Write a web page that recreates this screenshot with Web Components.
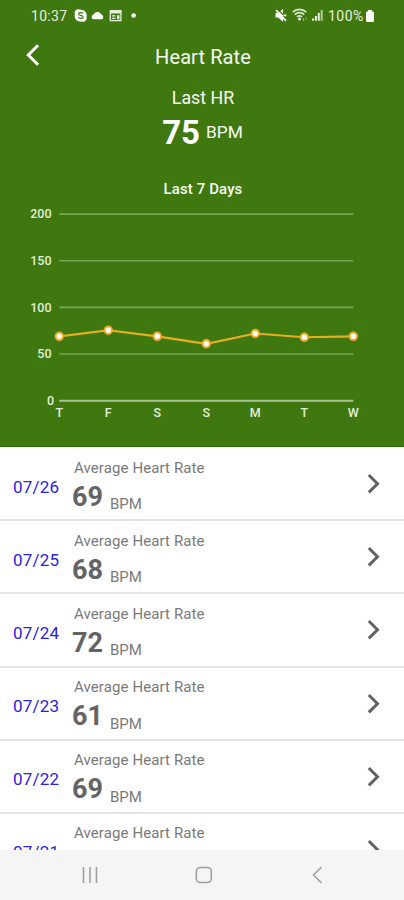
<!DOCTYPE html>
<html lang="en">
<head>
<meta charset="utf-8">
<title>Heart Rate</title>
<style>
  body {
    margin: 0;
    font-family: Roboto, "Liberation Sans", sans-serif;
    background: #fff;
  }
</style>
</head>
<body>
<heart-app>
  <status-bar slot="header" time="10:37" battery="100%"></status-bar>
  <title-bar slot="header">Heart Rate</title-bar>
  <last-reading slot="header" value="75" unit="BPM">Last HR</last-reading>
  <week-chart slot="header" values="69,75.5,69,61,72,68,69" days="T,F,S,S,M,T,W">Last 7 Days</week-chart>
  <day-row date="07/26" value="69">Average Heart Rate</day-row>
  <day-row date="07/25" value="68">Average Heart Rate</day-row>
  <day-row date="07/24" value="72">Average Heart Rate</day-row>
  <day-row date="07/23" value="61">Average Heart Rate</day-row>
  <day-row date="07/22" value="69">Average Heart Rate</day-row>
  <day-row date="07/21" value="68">Average Heart Rate</day-row>
  <nav-bar slot="footer"></nav-bar>
</heart-app>

<script>
class HeartApp extends HTMLElement {
  constructor() {
    super();
    this.attachShadow({ mode: 'open' }).innerHTML = `
      <style>
        :host {
          display: flex;
          flex-direction: column;
          height: 900px;
          overflow: hidden;
        }

        header {
          flex: none;
          height: 447px;
          box-sizing: border-box;
          background: #3e780e;
          border-bottom: 1px solid #267000;
          color: #f8fcf5;
        }

        main {
          flex: 1;
          min-height: 0;
          padding-top: 1px;
          overflow: hidden;
        }
      </style>
      <header><slot name="header"></slot></header>
      <main><slot></slot></main>
      <slot name="footer"></slot>
    `;
  }
}

class StatusBar extends HTMLElement {
  connectedCallback() {
    this.attachShadow({ mode: 'open' }).innerHTML = `
      <style>
        :host {
          display: flex;
          align-items: center;
          height: 32px;
          padding: 0 29px 0 31px;
          font-size: 14px;
          line-height: 32px;
          color: #e6f0df;
        }

        svg {
          flex: none;
          fill: currentColor;
        }

        .time {
          width: 43px;
          letter-spacing: 0.3px;
        }

        .battery {
          width: 37px;
          letter-spacing: 0.5px;
        }

        .gap {
          flex: 1;
        }
      </style>
      <span class="time">${this.getAttribute('time')}</span>
      <svg width="64" height="16" viewBox="74 8 64 16">
        <path d="M78.5 9.2c1 0 1.500.2 2.200.5a5.700 5.700 0 0 1 5.800 7.200 3.600 3.600 0 0 1-5 4.500 5.700 5.700 0 0 1-6.600-7.300 3.600 3.600 0 0 1 3.600-4.900z" fill="#fff"/>
        <path d="M83 13.300c-.6-.9-4.500-1.200-4.500.6 0 1.700 4.700 1.100 4.700 3.100 0 1.900-4.100 1.800-4.900.3" fill="none" stroke="#3e780e" stroke-width="1.200"/>
        <path d="M93.500 19.300a2.400 2.400 0 0 1 0-4.700 4.100 4.100 0 0 1 7.600-.3 3 3 0 0 1 1.300 5z" fill="#fff"/>
        <path d="M110.300 10.700h10.600v10h-10.600z" fill="none" stroke="#e6f0df" stroke-width="1.300"/>
        <path d="M110 11h11.200v2.600H110zM112 15.200h3.500v1.300H112zM117 15.200h2.500v4H117zM112 17.700h3.500v1.300H112z"/>
        <circle cx="133.600" cy="15.500" r="2.300" fill="#fff"/>
      </svg>
      <span class="gap"></span>
      <svg width="53" height="16" viewBox="275 8 53 16">
        <path d="M275.500 13h2.600l4.900-3.900v12.700l-4.900-4.300h-2.600z" fill="#fff"/>
        <path d="M278.500 10l9 9.600" stroke="#3e780e" stroke-width="1.200"/>
        <path d="M276 10l10 10.800M283.500 15.300h2.800" fill="none" stroke="#fff" stroke-width="1.700"/>
        <g fill="none" stroke="#d4e5ca" stroke-width="1.700">
          <path d="M292.700 12.200a9.800 9.800 0 0 1 13.600 0M294.800 14.600a6.700 6.700 0 0 1 9.400 0M297 17a3.600 3.600 0 0 1 5 0"/>
        </g>
        <circle cx="299.500" cy="19" r="1.500"/>
        <path d="M303 18h1v3h-1zM305.500 17h1v3h-1z" opacity=".45"/>
        <path d="M312 18.500h2v2.300h-2zM314.900 16h2v4.800h-2zM317.800 13h2v7.800h-2z"/>
        <path d="M320.700 10h2v10.800h-2z" opacity=".7"/>
      </svg>
      <span class="battery">${this.getAttribute('battery')}</span>
      <svg width="10" height="14" viewBox="0 0 10 14">
        <path d="M3 1h4v1.500h.7a1.300 1.300 0 0 1 1.300 1.300v8a1.200 1.200 0 0 1-1.200 1.200H2.200A1.200 1.200 0 0 1 1 11.800v-8a1.300 1.300 0 0 1 1.300-1.300H3z" fill="#fff"/>
      </svg>
    `;
  }
}

class TitleBar extends HTMLElement {
  constructor() {
    super();
    this.attachShadow({ mode: 'open' }).innerHTML = `
      <style>
        :host {
          display: grid;
          grid-template-columns: 64px 1fr 64px;
          align-items: center;
          height: 50px;
          padding-right: 1px;
          padding-left: 3px;
          font-size: 20px;
          letter-spacing: 0.1px;
          text-align: center;
        }

        svg {
          margin: -4px 0 0 21px;
        }
      </style>
      <svg width="18" height="24" viewBox="24 43 18 24" fill="none" stroke="#fff" stroke-width="3">
        <path d="M38 45.300L28.300 55 38 64.700"/>
      </svg>
      <span><slot></slot></span>
    `;
  }
}

class LastReading extends HTMLElement {
  connectedCallback() {
    this.attachShadow({ mode: 'open' }).innerHTML = `
      <style>
        :host {
          display: block;
          padding-left: 1px;
          text-align: center;
        }

        .label {
          padding-left: 1px;
          font-size: 17.800px;
          line-height: 32px;
        }

        .reading {
          display: flex;
          justify-content: center;
          align-items: center;
          gap: 6px;
          height: 36px;
        }

        b {
          color: #fff;
          font-size: 33px;
        }

        .unit {
          font-size: 17.300px;
          margin-top: -1px;
        }
      </style>
      <div class="label"><slot></slot></div>
      <div class="reading">
        <b>${this.getAttribute('value')}</b>
        <span class="unit">${this.getAttribute('unit')}</span>
      </div>
    `;
  }
}

class WeekChart extends HTMLElement {
  connectedCallback() {
    const left = 59.3;
    const right = 353.3;
    const values = this.getAttribute('values').split(',').map(Number);
    const days = this.getAttribute('days').split(',');
    const step = (right - left) / (values.length - 1);
    const x = (i) => left + i * step;
    const y = (v) => 200.7 - v * 0.933;

    const grid = [200, 150, 100, 50, 0].map((v) => `
      <path class="${v ? 'line' : 'line base'}" d="M${left} ${y(v)}H${right}"/>
      <text class="tick" x="${v ? 51.5 : 54}" y="${y(v) + 4.2}">${v}</text>
    `).join('');
    const labels = days.map((d, i) => `<text class="day" x="${x(i)}" y="216.7">${d}</text>`).join('');
    const dots = values.map((v, i) => `<circle cx="${x(i)}" cy="${y(v)}" r="3.7"/>`).join('');

    this.attachShadow({ mode: 'open' }).innerHTML = `
      <style>
        :host {
          display: block;
          padding-top: 28px;
        }

        .title {
          padding-left: 2px;
          font-size: 15px;
          font-weight: 500;
          line-height: 22px;
          letter-spacing: 0.1px;
          text-align: center;
        }

        svg {
          display: block;
        }

        text {
          fill: #e3eedb;
          font-size: 12.500px;
          font-weight: 500;
        }

        .tick {
          text-anchor: end;
        }

        .day {
          text-anchor: middle;
        }

        .line {
          stroke: #78a558;
          stroke-width: 1.600;
        }

        .base {
          stroke: #a9c696;
          stroke-width: 2;
        }

        polyline {
          fill: none;
          stroke: #e9ae1b;
          stroke-width: 2.200;
        }

        circle {
          fill: #fff;
          stroke: #f6ab27;
          stroke-width: 2;
        }
      </style>
      <div class="title"><slot></slot></div>
      <svg width="404" height="230">
        ${grid}
        ${labels}
        <polyline points="${values.map((v, i) => `${x(i)},${y(v)}`).join(' ')}"/>
        ${dots}
      </svg>
    `;
  }
}

class DayRow extends HTMLElement {
  connectedCallback() {
    this.attachShadow({ mode: 'open' }).innerHTML = `
      <style>
        :host {
          display: grid;
          grid-template-columns: 60px 1fr 22px;
          height: 73.200px;
          box-sizing: border-box;
          padding: 0 20px 0 13px;
          border-bottom: 2px solid #e4e4e4;
          color: #7a7a7a;
        }

        .date {
          padding-top: 27.500px;
          color: #2c22e0;
          font-size: 17px;
          line-height: 22px;
          letter-spacing: 0.2px;
        }

        .label {
          padding: 9.500px 0 0 1px;
          font-size: 15px;
          line-height: 20px;
          letter-spacing: 0.1px;
        }

        .reading {
          display: flex;
          gap: 8px;
          line-height: 34px;
          margin: 2px 0 0 -1px;
        }

        b {
          width: 30px;
          color: #646464;
          font-size: 27px;
          font-weight: 700;
        }

        .unit {
          padding-top: 7.500px;
          font-size: 15px;
        }

        svg {
          margin-top: 24px;
        }
      </style>
      <span class="date">${this.getAttribute('date')}</span>
      <div>
        <div class="label"><slot></slot></div>
        <div class="reading">
          <b>${this.getAttribute('value')}</b>
          <span class="unit">BPM</span>
        </div>
      </div>
      <svg width="22" height="24" viewBox="0 0 22 24" fill="none" stroke="#626262" stroke-width="3">
        <path d="M6.800 3l8.700 8.700-8.700 8.700"/>
      </svg>
    `;
  }
}

class NavBar extends HTMLElement {
  constructor() {
    super();
    this.attachShadow({ mode: 'open' }).innerHTML = `
      <style>
        :host {
          flex: none;
          display: flex;
          justify-content: center;
          align-items: center;
          gap: 89px;
          height: 50px;
          padding-left: 3px;
          background: #f5f5f5;
        }

        svg {
          fill: none;
          stroke: #a0a0a0;
          stroke-width: 1.600;
        }
      </style>
      <svg width="24" height="24"><path d="M4.500 4v16M11 4v16M17.500 4v16"/></svg>
      <svg width="24" height="24"><rect x="4.300" y="4.500" width="15" height="15" rx="4"/></svg>
      <svg width="24" height="24"><path d="M16.500 4l-8 8 8 8"/></svg>
    `;
  }
}

customElements.define('heart-app', HeartApp);
customElements.define('status-bar', StatusBar);
customElements.define('title-bar', TitleBar);
customElements.define('last-reading', LastReading);
customElements.define('week-chart', WeekChart);
customElements.define('day-row', DayRow);
customElements.define('nav-bar', NavBar);
</script>
</body>
</html>
